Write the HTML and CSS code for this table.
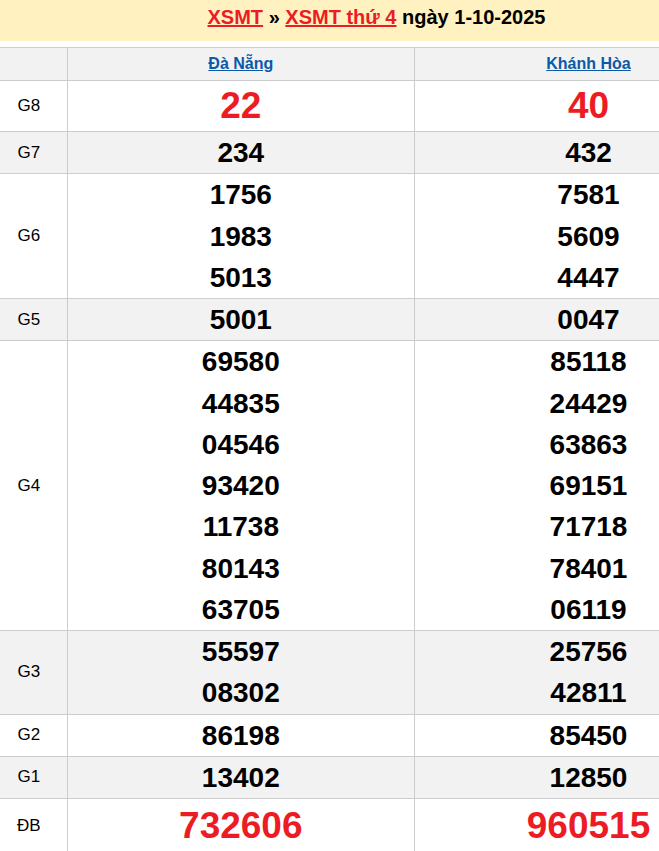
FILE: index.html
```html
<!DOCTYPE html>
<html lang="vi">
<head>
<meta charset="utf-8">
<title>XSMT thứ 4 ngày 1-10-2025</title>
<link rel="stylesheet" href="styles.css">
</head>
<body>
<div class="page">
  <h2 class="title"><a href="#">XSMT</a> » <a href="#">XSMT thứ 4</a> ngày 1-10-2025</h2>
  <table class="kq">
    <colgroup><col class="c-label"><col class="c-prov"><col class="c-prov"></colgroup>
    <thead>
      <tr class="gray"><th></th><th><a href="#">Đà Nẵng</a></th><th><a href="#">Khánh Hòa</a></th></tr>
    </thead>
    <tbody>
      <tr class="g8"><td class="lbl">G8</td><td><div class="big red">22</div></td><td><div class="big red">40</div></td></tr>
      <tr class="gray"><td class="lbl">G7</td><td><div class="n">234</div></td><td><div class="n">432</div></td></tr>
      <tr><td class="lbl">G6</td><td><div class="n">1756</div><div class="n">1983</div><div class="n">5013</div></td><td><div class="n">7581</div><div class="n">5609</div><div class="n">4447</div></td></tr>
      <tr class="gray"><td class="lbl">G5</td><td><div class="n">5001</div></td><td><div class="n">0047</div></td></tr>
      <tr><td class="lbl">G4</td>
        <td><div class="n">69580</div><div class="n">44835</div><div class="n">04546</div><div class="n">93420</div><div class="n">11738</div><div class="n">80143</div><div class="n">63705</div></td>
        <td><div class="n">85118</div><div class="n">24429</div><div class="n">63863</div><div class="n">69151</div><div class="n">71718</div><div class="n">78401</div><div class="n">06119</div></td></tr>
      <tr class="gray"><td class="lbl">G3</td><td><div class="n">55597</div><div class="n">08302</div></td><td><div class="n">25756</div><div class="n">42811</div></td></tr>
      <tr><td class="lbl">G2</td><td><div class="n">86198</div></td><td><div class="n">85450</div></td></tr>
      <tr class="gray"><td class="lbl">G1</td><td><div class="n">13402</div></td><td><div class="n">12850</div></td></tr>
      <tr class="db"><td class="lbl">ĐB</td><td><div class="big red">732606</div></td><td><div class="big red">960515</div></td></tr>
    </tbody>
  </table>
</div>
</body>
</html>
```
FILE: styles.css
```css
html, body {
  margin: 0;
  padding: 0;
  overflow: hidden;
  background: #fff;
}
body {
  font-family: "Liberation Sans", Arial, sans-serif;
  color: #000;
}
.page {
  width: 762px;
}
.title {
  margin: 0 0 6px 0;
  height: 41px;
  box-sizing: border-box;
  padding: 5px 9px 0 0;
  background: #fff2c0;
  text-align: center;
  font-size: 20px;
  font-weight: bold;
  line-height: 24px;
}
.title a {
  color: #ec1c24;
  text-decoration: underline;
}
.kq {
  width: 762px;
  border-collapse: collapse;
  table-layout: fixed;
}
.c-label { width: 67px; }
.c-prov { width: 347px; }
.kq th, .kq td {
  border-top: 1px solid #ccc;
  border-bottom: 1px solid #ccc;
  border-left: 1px solid #ccc;
  padding: 0;
  text-align: center;
  vertical-align: middle;
}
.kq th:first-child, .kq td:first-child {
  border-left: none;
}
.kq thead th {
  height: 32px;
  font-size: 16px;
  font-weight: bold;
}
.kq thead a {
  color: #0b5aa8;
  text-decoration: underline;
}
.gray th, .gray td {
  background: #f2f2f2;
}
.lbl {
  font-size: 17px;
  padding-right: 9px !important;
}
.n {
  font-size: 28px;
  font-weight: bold;
  line-height: 41.25px;
}
.big {
  font-size: 37px;
  font-weight: bold;
  line-height: 50px;
}
.db .big {
  line-height: 54px;
}
.red {
  color: #ec1c24;
}
```
